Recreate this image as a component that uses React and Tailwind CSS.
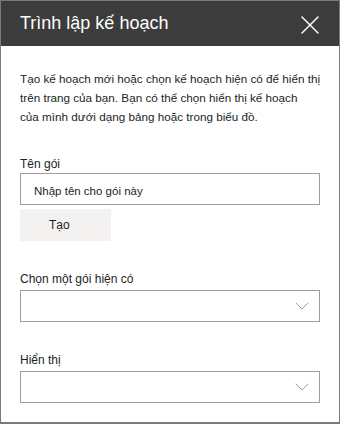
import { X, ChevronDown } from "lucide-react";

function Field({ label, children, className = "" }) {
  return (
    <div className={className}>
      <label className="block h-[18px] text-[12px] leading-[18px] text-[#201f1e]">{label}</label>
      {children}
    </div>
  );
}

function Dropdown() {
  return (
    <div className="mt-[2px] flex h-[32px] w-[300px] items-center justify-end border border-[#a19f9d] bg-white pr-[5px]">
      <ChevronDown size={24} strokeWidth={1} className="text-[#a19f9d]" />
    </div>
  );
}

export default function App() {
  return (
    <div
      className="flex h-[424px] w-[340px] flex-col border border-b-2 border-[#7a7a7a] bg-white"
      style={{ fontFamily: '"Segoe UI", "Liberation Sans", Arial, sans-serif' }}
    >
      <header className="flex h-[45px] shrink-0 items-center justify-between bg-[#3c3c3c] pl-[19px] pr-[13px]">
        <h1 className="text-[18px] font-normal text-white">Trình lập kế hoạch</h1>
        <X size={32} strokeWidth={1.1} className="mt-[3px] text-white" />
      </header>

      <main className="px-[19px] pt-[23px]">
        <p className="whitespace-nowrap text-[11.7px] leading-[19px] text-[#201f1e]">
          Tạo kế hoạch mới hoặc chọn kế hoạch hiện có để hiển thị
          <br />
          trên trang của bạn. Bạn có thể chọn hiển thị kế hoạch
          <br />
          của mình dưới dạng bảng hoặc trong biểu đồ.
        </p>

        <Field label="Tên gói" className="mt-[29px]">
          <div className="flex h-[32px] w-[300px] items-center border border-[#a19f9d] bg-white px-[13px] pt-[5px]">
            <span className="text-[11.5px] text-[#201f1e]">Nhập tên cho gói này</span>
          </div>
          <button className="mt-[4px] flex h-[32px] w-[91px] items-center bg-[#f3f2f1] pl-[29px] text-[12px] text-[#201f1e]">
            Tạo
          </button>
        </Field>

        <Field label="Chọn một gói hiện có" className="mt-[29px]">
          <Dropdown />
        </Field>

        <Field label="Hiển thị" className="mt-[29px]">
          <Dropdown />
        </Field>
      </main>
    </div>
  );
}
